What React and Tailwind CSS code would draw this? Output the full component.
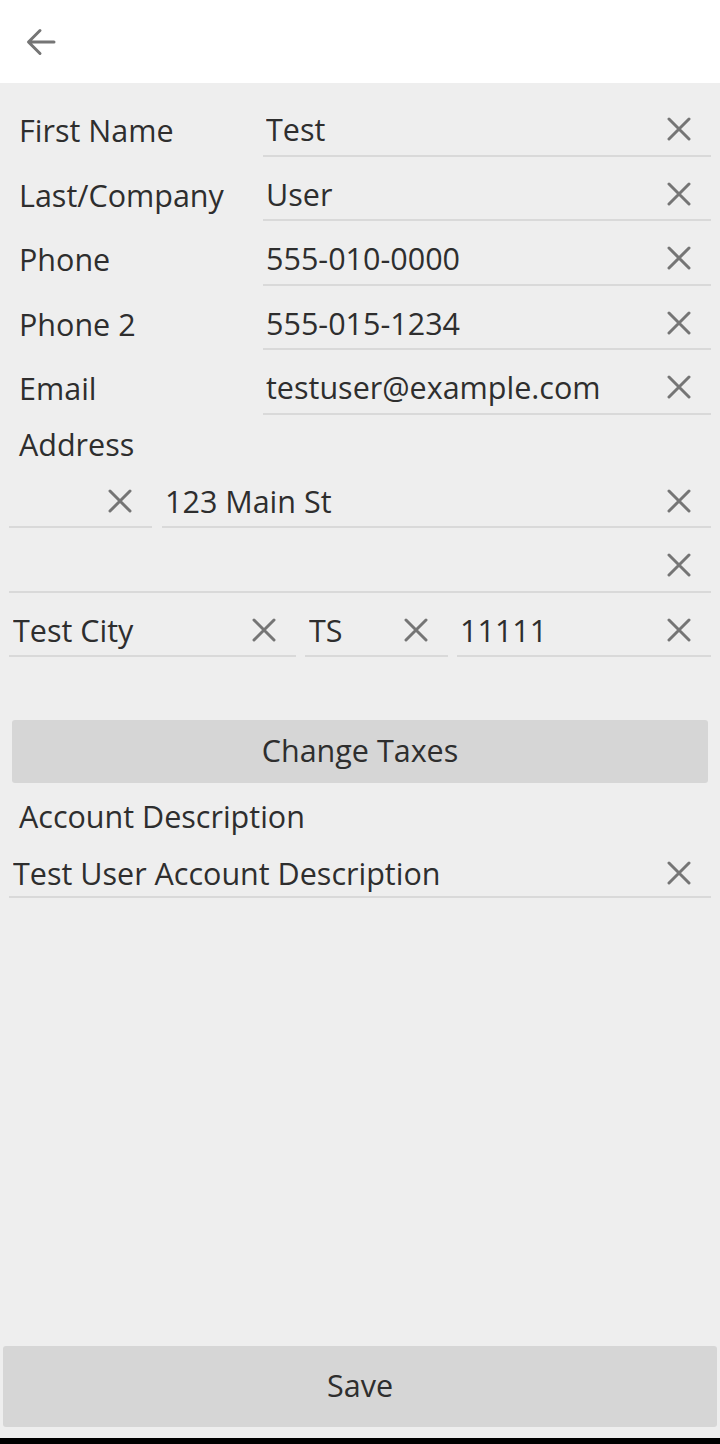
function ClearIcon() {
  return (
    <svg width="24" height="24" viewBox="0 0 24 24" className="shrink-0">
      <path d="M2 2L22 22M22 2L2 22" stroke="#757575" strokeWidth="3" strokeLinecap="round" />
    </svg>
  );
}

function Field({ value, className = "", pad = "pl-[3px]" }) {
  return (
    <div className={`flex items-center h-full border-b-2 border-[#d9d9d9] pr-[20px] ${pad} ${className}`}>
      <span className="flex-1 truncate">{value}</span>
      <ClearIcon />
    </div>
  );
}

function Row({ label, value }) {
  return (
    <div className="flex h-[64.5px]">
      <div className="w-[263px] shrink-0 pl-[19px] pt-[12px] flex items-center">{label}</div>
      <Field value={value} className="flex-1 mr-[9px] pt-[12px]" />
    </div>
  );
}

const rows = [
  ["First Name", "Test"],
  ["Last/Company", "User"],
  ["Phone", "555-010-0000"],
  ["Phone 2", "555-015-1234"],
  ["Email", "testuser@example.com"],
];

export default function App() {
  return (
    <div className="h-[1444px] flex flex-col bg-[#eeeeee] text-[#2e2e2e] text-[30.5px] leading-[40px] font-['Open_Sans',sans-serif]">
      <div className="h-[83px] bg-white shrink-0 flex items-center pl-[26px]">
        <svg width="30" height="28" viewBox="0 0 30 28">
          <path d="M28 14H3M14 2.5L2.5 14L14 25.5" fill="none" stroke="#757575" strokeWidth="3" strokeLinecap="round" strokeLinejoin="round" />
        </svg>
      </div>

      <div className="pt-[9px]">
        {rows.map(([l, v]) => (
          <Row key={l} label={l} value={v} />
        ))}

        <div className="h-[49px] pl-[19px] pt-[10px] flex items-center">Address</div>

        <div className="flex h-[64.5px] gap-[10px] px-[9px]">
          <Field value="" className="w-[143px] shrink-0 pt-[12px]" />
          <Field value="123 Main St" className="flex-1 pt-[12px]" />
        </div>
        <div className="flex h-[64.5px] px-[9px]">
          <Field value="" className="flex-1 pt-[12px]" />
        </div>
        <div className="flex h-[64.5px] gap-[9px] px-[9px]">
          <Field value="Test City" className="w-[287px] shrink-0 pt-[12px]" pad="pl-[4px]" />
          <Field value="TS" className="w-[143px] shrink-0 pt-[12px]" pad="pl-[4px]" />
          <Field value="11111" className="flex-1 pt-[12px]" pad="pl-[3px]" />
        </div>

        <div className="mt-[63px] mx-[12px] h-[63px] rounded-[3px] bg-[#d6d6d6] flex items-center justify-center pb-[3px]">
          Change Taxes
        </div>

        <div className="h-[66px] pl-[19px] flex items-center">Account Description</div>

        <div className="flex h-[49px] px-[9px]">
          <Field value="Test User Account Description" className="flex-1" pad="pl-[4px]" />
        </div>
      </div>

      <div className="flex-1" />

      <div className="mx-[3px] h-[81px] rounded-[3px] bg-[#d6d6d6] flex items-center justify-center shrink-0 pb-[3px]">
        Save
      </div>
      <div className="h-[11px] shrink-0" />
      <div className="h-[6px] bg-black shrink-0" />
    </div>
  );
}
